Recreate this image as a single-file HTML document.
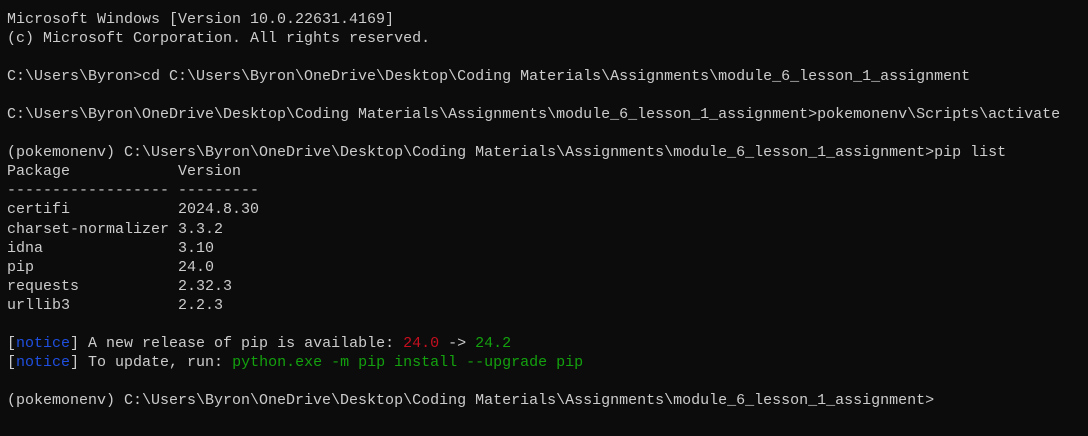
<!DOCTYPE html>
<html><head><style>
html,body{margin:0;padding:0;background:#0c0c0c;width:1088px;height:436px;overflow:hidden}
pre{margin:0;position:absolute;left:7px;top:10px;font-family:"Liberation Mono",monospace;font-size:15px;line-height:19.05px;color:#cccccc}
.b{color:#1f4fe0}.g{color:#13a10e}.r{color:#c50f1f}
</style></head><body><pre>Microsoft Windows [Version 10.0.22631.4169]
(c) Microsoft Corporation. All rights reserved.

C:\Users\Byron&gt;cd C:\Users\Byron\OneDrive\Desktop\Coding Materials\Assignments\module_6_lesson_1_assignment

C:\Users\Byron\OneDrive\Desktop\Coding Materials\Assignments\module_6_lesson_1_assignment&gt;pokemonenv\Scripts\activate

(pokemonenv) C:\Users\Byron\OneDrive\Desktop\Coding Materials\Assignments\module_6_lesson_1_assignment&gt;pip list
Package            Version
------------------ ---------
certifi            2024.8.30
charset-normalizer 3.3.2
idna               3.10
pip                24.0
requests           2.32.3
urllib3            2.2.3

[<span class="b">notice</span>] A new release of pip is available: <span class="r">24.0</span> -&gt; <span class="g">24.2</span>
[<span class="b">notice</span>] To update, run: <span class="g">python.exe -m pip install --upgrade pip</span>

(pokemonenv) C:\Users\Byron\OneDrive\Desktop\Coding Materials\Assignments\module_6_lesson_1_assignment&gt;</pre></body></html>
